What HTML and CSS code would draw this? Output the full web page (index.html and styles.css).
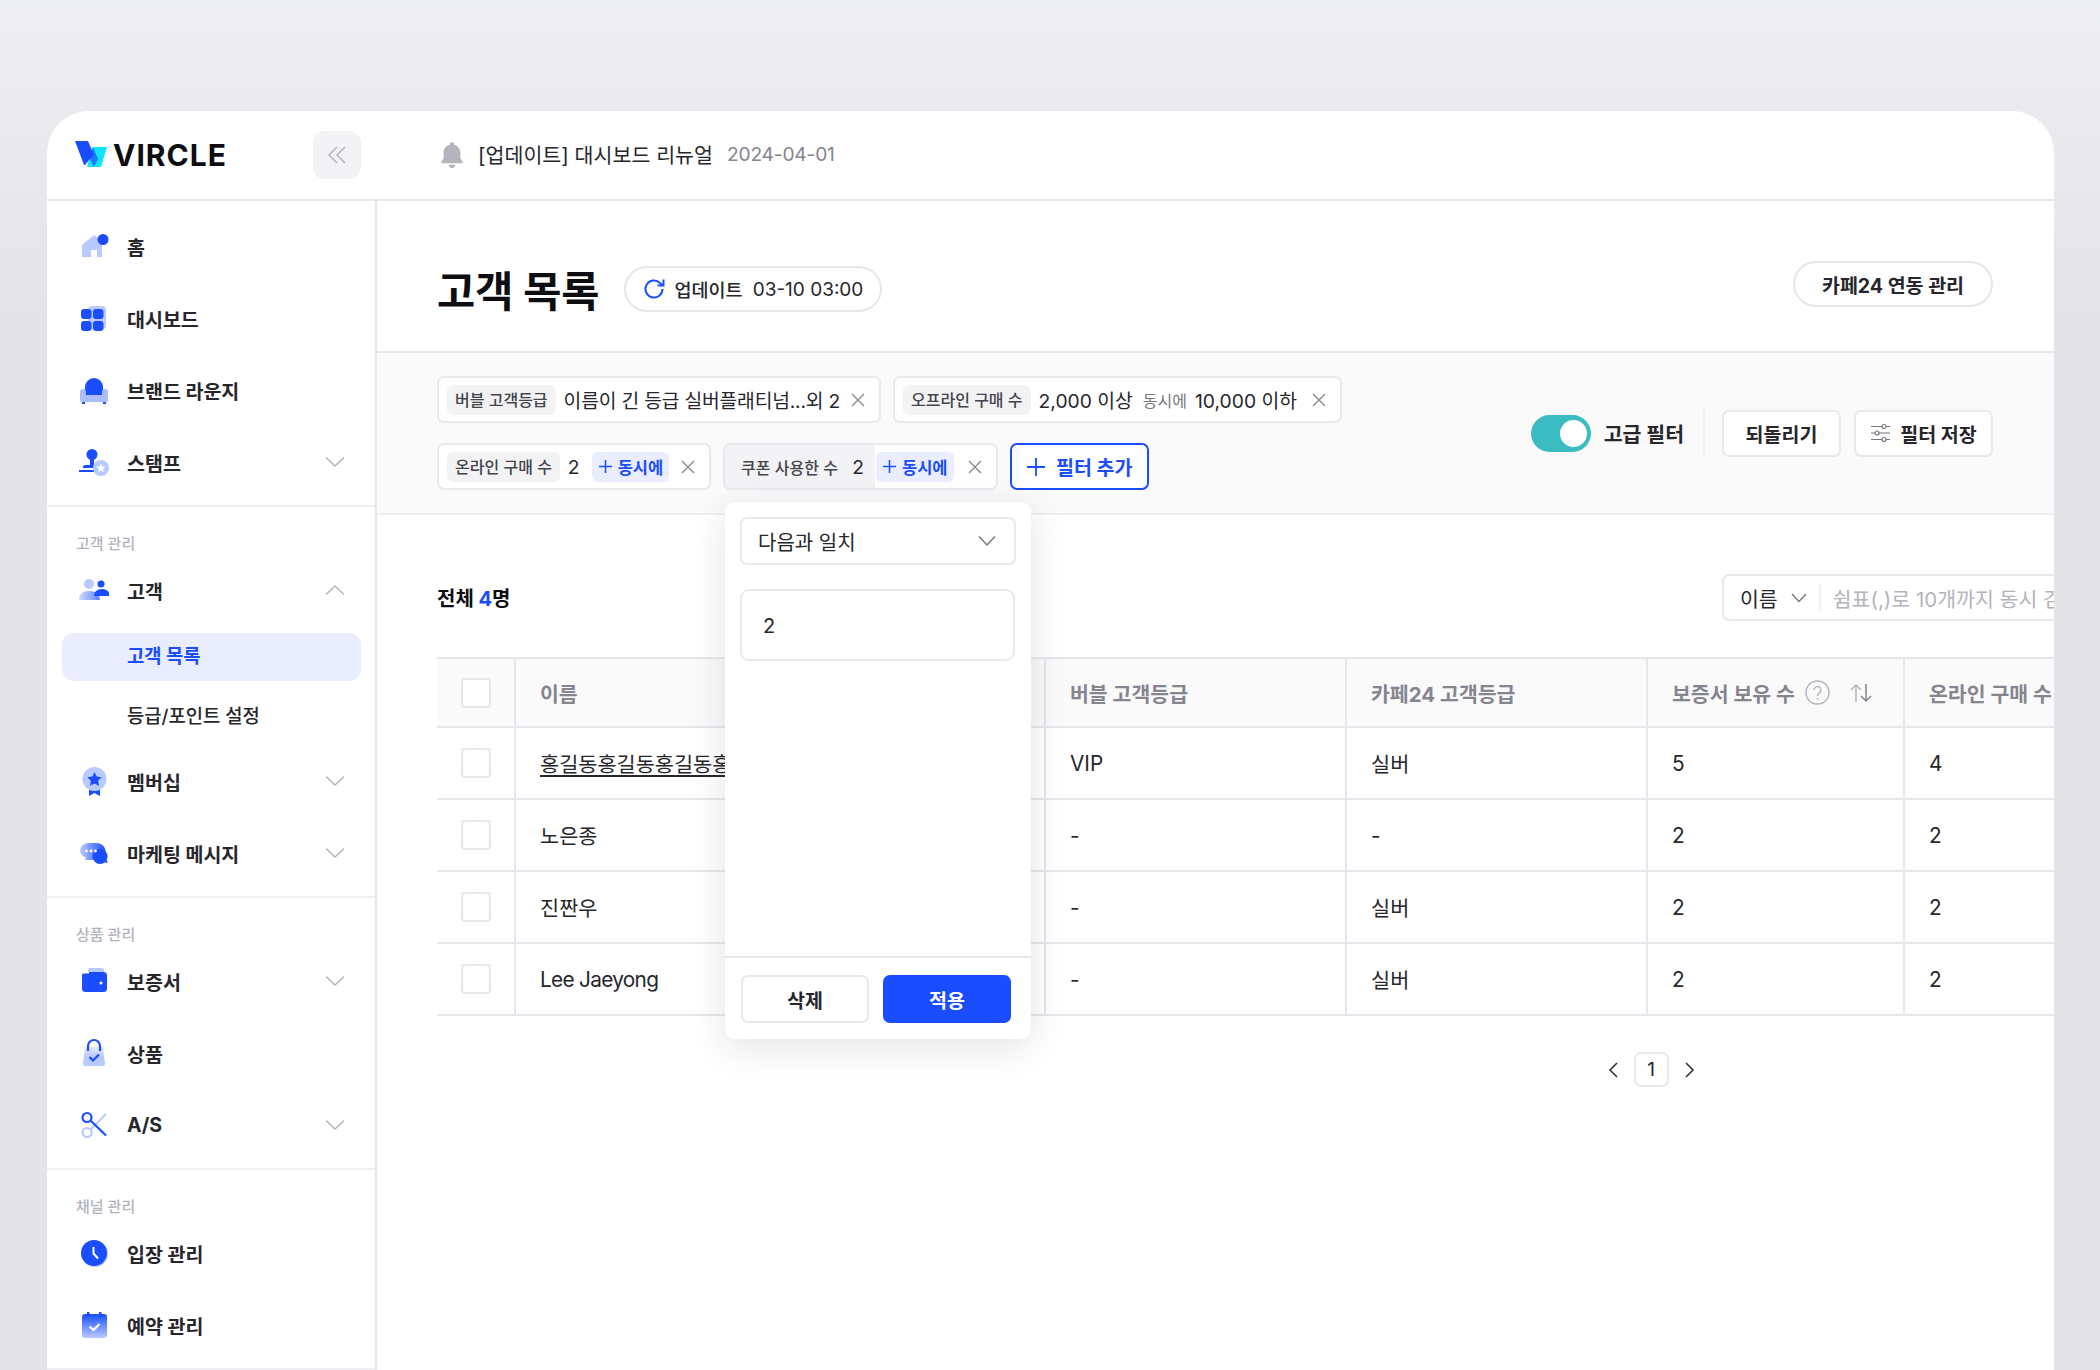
FILE: index.html
```html
<!DOCTYPE html>
<html lang="ko">
<head>
    <meta charset="UTF-8">
    <title>고객 목록</title>
    <link rel="stylesheet" href="styles.css">
</head>
<body>
<svg class="defs" width="0" height="0">
    <defs>
        <linearGradient id="fadeDown" x1="0" y1="0" x2="0" y2="1"><stop offset="0" stop-color="#1a4dff"/><stop offset="1" stop-color="#b9caff"/></linearGradient>
        <linearGradient id="fadeRight" x1="0" y1="0" x2="1" y2="0"><stop offset="0" stop-color="#b9caff"/><stop offset="1" stop-color="#1a4dff"/></linearGradient>
        <linearGradient id="bagFill" x1="0" y1="0" x2="0" y2="1"><stop offset="0" stop-color="#e4eaff"/><stop offset=".5" stop-color="#b9caff"/><stop offset="1" stop-color="#b9caff"/></linearGradient>
    </defs>
</svg>
<div class="app">
    <header class="topbar">
        <div class="brand">
            <svg class="logo-mark" width="33" height="28" viewBox="0 0 33 28">
                <path d="M18 6H32L26 26H12Z" fill="#0fe3ff"/>
                <path d="M18 6L23 18L19 26L14 16Z" fill="#1a7bff"/>
                <path d="M0 0H13L19 14L15 18L10 24H9Z" fill="#1a4dff"/>
            </svg>
            <span class="logo-text">VIRCLE</span>
            <button class="collapse">
                <svg width="20" height="20" viewBox="0 0 20 20" fill="none" stroke="#b3b3bd" stroke-width="1.5"><path d="M10 2L2 10L10 18M18 2L10 10L18 18"/></svg>
            </button>
        </div>
        <div class="notice">
            <svg width="28" height="28" viewBox="0 0 26 26" fill="#b4b4bd"><path d="M13 2a2 2 0 0 1 2 2v.4c3.600.9 5.800 3.800 5.800 7.600v5l2 3.200v1.300H3.200v-1.300l2-3.200v-5c0-3.800 2.200-6.700 5.800-7.600V4a2 2 0 0 1 2-2z"/><path d="M10 23h6a3 3 0 0 1-6 0z"/></svg>
            <span class="notice-text">[업데이트] 대시보드 리뉴얼</span>
            <span class="notice-date">2024-04-01</span>
        </div>
    </header>

    <div class="body">
        <nav class="sidebar">
            <div class="nav-group nav-group-first">
                <a class="nav-item">
                    <svg class="nav-icon" viewBox="0 0 30 30"><path d="M3 14L15 4L23 10V26H18V19H12V26H3Z" fill="#b9caff"/><circle cx="24" cy="8.5" r="5.5" fill="#1a4dff"/></svg>
                    <span>홈</span>
                </a>
                <a class="nav-item">
                    <svg class="nav-icon" viewBox="0 0 30 30"><rect x="9" y="3" width="18" height="23" rx="4" fill="#b9caff"/><rect x="2" y="6" width="10.5" height="10" rx="3" fill="#1a4dff"/><rect x="14" y="6" width="10.5" height="10" rx="3" fill="#1a4dff"/><rect x="2" y="18" width="10.5" height="10" rx="3" fill="#1a4dff"/><rect x="14" y="18" width="10.5" height="10" rx="3" fill="#1a4dff"/></svg>
                    <span>대시보드</span>
                </a>
                <a class="nav-item">
                    <svg class="nav-icon" viewBox="0 0 30 30"><path d="M6 22V12a9 9 0 0 1 18 0V22Z" fill="#1a4dff"/><path d="M1 17a3 3 0 0 1 6 0v3h16v-3a3 3 0 0 1 6 0v8a2 2 0 0 1-2 2H3a2 2 0 0 1-2-2Z" fill="#a9bdff"/><rect x="3" y="27" width="3" height="2" fill="#1a4dff"/><rect x="24" y="27" width="3" height="2" fill="#1a4dff"/></svg>
                    <span>브랜드 라운지</span>
                </a>
                <a class="nav-item">
                    <svg class="nav-icon" viewBox="0 0 30 30"><circle cx="13" cy="7.5" r="5.5" fill="#1a4dff"/><path d="M11 10h4v8h4a2 2 0 0 1 2 2v1H4v-1a2 2 0 0 1 2-2h5Z" fill="#1a4dff"/><rect y="23" width="18" height="2" fill="#1a4dff"/><circle cx="22" cy="21" r="8" fill="#b9caff"/><path d="M22 16.5l1.400 2.900 3.100.4-2.300 2.100.6 3.100-2.800-1.500-2.800 1.500.6-3.100-2.300-2.100 3.100-.4Z" fill="#fff"/></svg>
                    <span>스탬프</span>
                    <svg class="chevron" viewBox="0 0 20 12" fill="none" stroke="#b3b3bd" stroke-width="1.5"><path d="M1 1.500L10 10L19 1.500"/></svg>
                </a>
            </div>

            <div class="nav-group">
                <div class="nav-label">고객 관리</div>
                <a class="nav-item">
                    <svg class="nav-icon" viewBox="0 0 30 30"><circle cx="10" cy="9" r="5" fill="#b9caff"/><path d="M0 25c0-6 4-9 10-9s11 3 11 9Z" fill="url(#fadeRight)" opacity=".7"/><circle cx="22" cy="9" r="3.5" fill="#1a4dff"/><path d="M15 21c0-4 3-7 8-7s8 3 8 7Z" fill="#1a4dff"/></svg>
                    <span>고객</span>
                    <svg class="chevron" viewBox="0 0 20 12" fill="none" stroke="#b3b3bd" stroke-width="1.5"><path d="M1 10.500L10 2L19 10.500"/></svg>
                </a>
                <div class="sub-list">
                    <a class="sub-item sub-active">고객 목록</a>
                    <a class="sub-item">등급/포인트 설정</a>
                </div>
                <a class="nav-item">
                    <svg class="nav-icon" viewBox="0 0 30 30"><path d="M10 21h11v9l-5.500-3-5.500 3Z" fill="#1a4dff"/><circle cx="15.5" cy="13" r="12" fill="#b9caff"/><path d="M15.500 6l2.200 4.600 5 .7-3.600 3.500.9 5-4.500-2.400-4.500 2.400.9-5-3.600-3.500 5-.7Z" fill="#1a4dff"/></svg>
                    <span>멤버십</span>
                    <svg class="chevron" viewBox="0 0 20 12" fill="none" stroke="#b3b3bd" stroke-width="1.5"><path d="M1 1.500L10 10L19 1.500"/></svg>
                </a>
                <a class="nav-item">
                    <svg class="nav-icon" viewBox="0 0 30 30"><path d="M10 5h6a10 8 0 0 1 7 14 8 8 0 0 1-9 3H6l1-2.500C3 18 1 15.500 1 13a9 8 0 0 1 9-8Z" fill="url(#fadeRight)"/><circle cx="21" cy="18.5" r="7.5" fill="#1a4dff"/><path d="M24 24l5 1-2-4Z" fill="#1a4dff"/><circle cx="7.5" cy="13" r="1.4" fill="#fff"/><circle cx="12" cy="13" r="1.4" fill="#fff"/><circle cx="16.5" cy="13" r="1.4" fill="#fff"/></svg>
                    <span>마케팅 메시지</span>
                    <svg class="chevron" viewBox="0 0 20 12" fill="none" stroke="#b3b3bd" stroke-width="1.5"><path d="M1 1.500L10 10L19 1.500"/></svg>
                </a>
            </div>

            <div class="nav-group">
                <div class="nav-label">상품 관리</div>
                <a class="nav-item">
                    <svg class="nav-icon" viewBox="0 0 30 30"><rect x="9" y="2" width="16" height="8" rx="2" fill="#b9caff"/><rect x="3" y="6" width="25" height="20" rx="3.5" fill="#1a4dff"/><circle cx="22" cy="17" r="1.5" fill="#fff"/><rect x="3" y="6" width="7" height="1.5" fill="#fff"/></svg>
                    <span>보증서</span>
                    <svg class="chevron" viewBox="0 0 20 12" fill="none" stroke="#b3b3bd" stroke-width="1.5"><path d="M1 1.500L10 10L19 1.500"/></svg>
                </a>
                <a class="nav-item">
                    <svg class="nav-icon" viewBox="0 0 30 30"><path d="M6 9h18l2 17a2 2 0 0 1-2 2H6a2 2 0 0 1-2-2Z" fill="url(#bagFill)"/><path d="M9 13V8a6 6 0 0 1 12 0v5" fill="none" stroke="#1a4dff" stroke-width="2.2"/><path d="M10.500 19l3.500 3.500 6-6" fill="none" stroke="#1a4dff" stroke-width="2.2"/></svg>
                    <span>상품</span>
                </a>
                <a class="nav-item">
                    <svg class="nav-icon" viewBox="0 0 30 30" fill="none" stroke-width="2.2"><circle cx="8" cy="22.5" r="4.5" stroke="#b9caff"/><path d="M11.500 19.500L27 4" stroke="#b9caff"/><circle cx="8" cy="7.5" r="4.5" stroke="#1a4dff"/><path d="M11.500 10.500L27 25.500" stroke="#1a4dff"/></svg>
                    <span>A/S</span>
                    <svg class="chevron" viewBox="0 0 20 12" fill="none" stroke="#b3b3bd" stroke-width="1.5"><path d="M1 1.500L10 10L19 1.500"/></svg>
                </a>
            </div>

            <div class="nav-group">
                <div class="nav-label">채널 관리</div>
                <a class="nav-item">
                    <svg class="nav-icon" viewBox="0 0 30 30"><circle cx="16" cy="16" r="13" fill="#b9caff"/><circle cx="15" cy="15" r="13" fill="#1a4dff"/><path d="M14.500 9v6.500l4.500 5" fill="none" stroke="#fff" stroke-width="2"/></svg>
                    <span>입장 관리</span>
                </a>
                <a class="nav-item">
                    <svg class="nav-icon" viewBox="0 0 30 30"><rect x="3" y="4" width="25" height="24" rx="3" fill="url(#fadeDown)"/><rect x="8" y="2" width="2.5" height="4" fill="#1a4dff"/><rect x="20" y="2" width="2.5" height="4" fill="#1a4dff"/><path d="M10.500 16.500l4 3.500 6-6" fill="none" stroke="#fff" stroke-width="2.2"/></svg>
                    <span>예약 관리</span>
                </a>
            </div>
        </nav>

        <main class="main">
            <section class="title-row">
                <h1 class="page-title">고객 목록</h1>
                <div class="update-pill">
                    <svg width="22" height="22" viewBox="0 0 22 22" fill="none" stroke="#1a4dff" stroke-width="2"><path d="M19.500 11a8.500 8.500 0 1 1-2.600-6.100L20 7.500"/><path d="M20.500 1.500V7.500H14.500"/></svg>
                    <strong>업데이트</strong>
                    <span>03-10 03:00</span>
                </div>
                <button class="link-pill">카페24 연동 관리</button>
            </section>

            <section class="filter-bar">
                <div class="chip-rows">
                    <div class="chip-row">
                        <div class="chip chip-a">
                            <span class="chip-label">버블 고객등급</span>
                            <span class="chip-value chip-value-long">이름이 긴 등급 실버플래티넘...외 2</span>
                            <svg class="chip-x" viewBox="0 0 16 16" fill="none" stroke="#8f8f99" stroke-width="1.5"><path d="M2 2L14 14M14 2L2 14"/></svg>
                        </div>
                        <div class="chip chip-b">
                            <span class="chip-label">오프라인 구매 수</span>
                            <span class="chip-value">2,000 이상</span>
                            <span class="chip-and">동시에</span>
                            <span class="chip-value">10,000 이하</span>
                            <svg class="chip-x" viewBox="0 0 16 16" fill="none" stroke="#8f8f99" stroke-width="1.5"><path d="M2 2L14 14M14 2L2 14"/></svg>
                        </div>
                    </div>
                    <div class="chip-row">
                        <div class="chip chip-c">
                            <span class="chip-label">온라인 구매 수</span>
                            <span class="chip-value">2</span>
                            <span class="chip-tag"><svg width="15" height="15" viewBox="0 0 15 15" stroke="#1a4dff" stroke-width="1.5"><path d="M7.500 1V14M1 7.500H14"/></svg>동시에</span>
                            <svg class="chip-x" viewBox="0 0 16 16" fill="none" stroke="#8f8f99" stroke-width="1.5"><path d="M2 2L14 14M14 2L2 14"/></svg>
                        </div>
                        <div class="chip chip-open">
                            <span class="chip-head"><span class="chip-head-label">쿠폰 사용한 수</span><span class="chip-value">2</span></span>
                            <span class="chip-tag"><svg width="15" height="15" viewBox="0 0 15 15" stroke="#1a4dff" stroke-width="1.5"><path d="M7.500 1V14M1 7.500H14"/></svg>동시에</span>
                            <svg class="chip-x" viewBox="0 0 16 16" fill="none" stroke="#8f8f99" stroke-width="1.5"><path d="M2 2L14 14M14 2L2 14"/></svg>
                        </div>
                        <button class="add-filter">
                            <svg width="20" height="20" viewBox="0 0 20 20" stroke="#1a4dff" stroke-width="1.8"><path d="M10 1V19M1 10H19"/></svg>
                            필터 추가
                        </button>
                    </div>
                </div>
                <div class="filter-actions">
                    <span class="toggle"><span class="knob"></span></span>
                    <span class="toggle-text">고급 필터</span>
                    <span class="v-sep"></span>
                    <button class="action-btn btn-reset">되돌리기</button>
                    <button class="action-btn btn-save">
                        <svg width="21" height="20" viewBox="0 0 21 20" fill="none" stroke="#77777f" stroke-width="1.2"><path d="M1 3.500H12M16 3.500H20M1 10H5M9 10H20M1 16.500H12M16 16.500H20"/><circle cx="14" cy="3.5" r="2"/><circle cx="7" cy="10" r="2"/><circle cx="14" cy="16.5" r="2"/></svg>
                        필터 저장
                    </button>
                </div>
            </section>

            <section class="content">
                <div class="toolbar">
                    <div class="count">전체 <em>4</em>명</div>
                    <div class="search">
                        <span class="search-type">이름
                            <svg width="16" height="10" viewBox="0 0 16 10" fill="none" stroke="#77777f" stroke-width="1.4"><path d="M1 1L8 8.500L15 1"/></svg>
                        </span>
                        <span class="search-hint">쉼표(,)로 10개까지 동시 검색 가능합니다</span>
                    </div>
                </div>

                <table class="grid">
                    <thead>
                        <tr>
                            <th class="col-check"><span class="checkbox"></span></th>
                            <th class="col-name">이름</th>
                            <th class="col-grade">버블 고객등급</th>
                            <th class="col-cafe">카페24 고객등급</th>
                            <th class="col-warranty">
                                <span class="th-inner">보증서 보유 수
                                    <svg class="help" width="25" height="25" viewBox="0 0 25 25" fill="none" stroke="#b3b3bd" stroke-width="1.4"><circle cx="12.5" cy="12.5" r="11.5"/><path d="M9 10a3.500 3.500 0 1 1 5.500 2.900c-1.300.9-2 1.500-2 3"/><path d="M12.500 18v1.800"/></svg>
                                    <svg class="sort" width="24" height="20" viewBox="0 0 24 20" fill="none" stroke-width="1.5"><path d="M7 19V2M2 7L7 2L12 7" stroke="#b3b3bd"/><path d="M17 1V18M12 13L17 18L22 13" stroke="#85858f"/></svg>
                                </span>
                            </th>
                            <th>온라인 구매 수</th>
                        </tr>
                    </thead>
                    <tbody>
                        <tr>
                            <td class="col-check"><span class="checkbox"></span></td>
                            <td><a class="name-link">홍길동홍길동홍길동홍길동홍길동</a></td>
                            <td>VIP</td><td>실버</td><td>5</td><td>4</td>
                        </tr>
                        <tr>
                            <td class="col-check"><span class="checkbox"></span></td>
                            <td>노은종</td>
                            <td>-</td><td>-</td><td>2</td><td>2</td>
                        </tr>
                        <tr>
                            <td class="col-check"><span class="checkbox"></span></td>
                            <td>진짠우</td>
                            <td>-</td><td>실버</td><td>2</td><td>2</td>
                        </tr>
                        <tr>
                            <td class="col-check"><span class="checkbox"></span></td>
                            <td class="name-latin">Lee Jaeyong</td>
                            <td>-</td><td>실버</td><td>2</td><td>2</td>
                        </tr>
                    </tbody>
                </table>

                <div class="pager">
                    <svg width="12" height="18" viewBox="0 0 12 18" fill="none" stroke="#33333a" stroke-width="1.6"><path d="M10 2L3 9L10 16"/></svg>
                    <span class="page-num">1</span>
                    <svg width="12" height="18" viewBox="0 0 12 18" fill="none" stroke="#33333a" stroke-width="1.6"><path d="M2 2L9 9L2 16"/></svg>
                </div>
            </section>

            <div class="popup">
                <div class="popup-body">
                    <div class="popup-select">다음과 일치
                        <svg width="20" height="12" viewBox="0 0 20 12" fill="none" stroke="#77777f" stroke-width="1.5"><path d="M2 1.500L10 10L18 1.500"/></svg>
                    </div>
                    <div class="popup-input">2</div>
                </div>
                <div class="popup-foot">
                    <button class="btn-delete">삭제</button>
                    <button class="btn-apply">적용</button>
                </div>
            </div>
        </main>
    </div>
</div>
</body>
</html>
```

FILE: styles.css
```css
* {
    margin: 0;
    padding: 0;
    box-sizing: border-box;
}

html, body {
    height: 1370px;
    overflow: hidden;
}

body {
    background: linear-gradient(#eeeff2 0, #e3e3e8 320px);
    font-family: "Inter", "Noto Sans CJK KR", sans-serif;
    color: #26262b;
}

button {
    font-family: inherit;
    background: none;
    border: 0;
}

.defs {
    position: absolute;
}

.app {
    width: 2007px;
    height: 1259px;
    margin: 111px 0 0 47px;
    background: #fff;
    border-radius: 42px 42px 0 0;
    overflow: hidden;
}

/* top bar */
.topbar {
    display: flex;
    height: 90px;
    border-bottom: 2px solid #e6e6ec;
}

.brand {
    display: flex;
    align-items: center;
    width: 329px;
    padding: 0 15px 0 28px;
}

.logo-mark {
    flex: none;
}

.logo-text {
    margin-left: 5px;
    font-size: 30px;
    font-weight: 700;
    color: #0d0d12;
    letter-spacing: 1px;
}

.collapse {
    display: flex;
    align-items: center;
    justify-content: center;
    width: 48px;
    height: 48px;
    margin-left: auto;
    background: #f3f3f5;
    border-radius: 12px;
}

.notice {
    display: flex;
    align-items: center;
    padding: 0 0 2px 62px;
    font-size: 20.6px;
}

.notice-text {
    margin-left: 12px;
}

.notice-date {
    margin-left: 14px;
    font-size: 19.2px;
    letter-spacing: -0.2px;
    color: #85858f;
}

/* side menu */
.body {
    display: flex;
    height: 1169px;
}

.sidebar {
    flex: none;
    width: 330px;
    border-right: 2px solid #e6e6ec;
}

.nav-group {
    padding: 27px 0 7px;
    border-bottom: 2px solid #efeff3;
}

.nav-group-first {
    padding-top: 9px;
}

.nav-label {
    height: 20px;
    padding-left: 29px;
    font-size: 15px;
    line-height: 20px;
    font-weight: 500;
    color: #b3b3bd;
}

.nav-item {
    display: flex;
    align-items: center;
    height: 72px;
    padding: 0 30px 0 32px;
    font-size: 19.5px;
    font-weight: 700;
}

.nav-icon {
    flex: none;
    width: 30px;
    height: 30px;
    margin-right: 18px;
}

.chevron {
    width: 20px;
    height: 12px;
    margin-left: auto;
}

.sub-list {
    display: flex;
    flex-direction: column;
    gap: 12px;
    padding: 7px 0 4px;
}

.sub-item {
    height: 48px;
    margin: 0 14px 0 15px;
    padding-left: 65px;
    border-radius: 12px;
    font-size: 18.8px;
    line-height: 48px;
    font-weight: 500;
}

.sub-active {
    background: #e9edff;
    color: #1a4dff;
    font-weight: 700;
}

/* main */
.main {
    position: relative;
    flex: 1;
    min-width: 0;
    overflow: hidden;
}

.title-row {
    display: flex;
    align-items: center;
    height: 152px;
    padding: 26px 61px 0 60px;
    border-bottom: 2px solid #e6e6ec;
}

.page-title {
    font-size: 41.5px;
    font-weight: 700;
    color: #0d0d12;
}

.update-pill {
    display: flex;
    align-items: center;
    height: 46px;
    margin-left: 24px;
    padding: 0 17px;
    border: 2px solid #e6e6ec;
    border-radius: 23px;
    font-size: 19px;
}

.update-pill strong {
    margin: 0 10px;
    font-size: 18.5px;
    font-weight: 500;
}

.link-pill {
    width: 200px;
    height: 46px;
    margin: 0 0 10px auto;
    border: 2px solid #e6e6ec;
    border-radius: 23px;
    font-size: 19.5px;
    font-weight: 700;
    color: #26262b;
}

.filter-bar {
    display: flex;
    align-items: center;
    justify-content: space-between;
    height: 162px;
    padding: 0 61px 0 60px;
    background: #fafafb;
    border-bottom: 2px solid #efeff3;
}

.chip-rows {
    display: flex;
    flex-direction: column;
    gap: 20px;
}

.chip-row {
    display: flex;
    gap: 12px;
}

.chip {
    display: flex;
    align-items: center;
    height: 47px;
    padding: 0 0 0 8px;
    background: #fff;
    border: 2px solid #e8e8ee;
    border-radius: 7px;
    font-size: 19.3px;
    white-space: nowrap;
}

.chip-a { width: 444px; }
.chip-b { width: 449px; }
.chip-c { width: 274px; }

.chip-label {
    height: 30px;
    padding: 0 8px;
    background: #f3f3f5;
    border-radius: 6px;
    font-size: 16px;
    line-height: 30px;
    font-weight: 500;
    color: #44444c;
}

.chip-value {
    margin-left: 8px;
}

.chip-value-long {
    letter-spacing: -0.2px;
}

.chip-and {
    margin-left: 10px;
    font-size: 16px;
    color: #77777f;
}

.chip-tag {
    display: flex;
    align-items: center;
    gap: 5px;
    height: 30px;
    margin-left: 12px;
    padding: 0 6px;
    background: #e9edff;
    border-radius: 6px;
    font-size: 16.5px;
    font-weight: 700;
    color: #1a4dff;
}

.chip-x {
    flex: none;
    width: 16px;
    height: 16px;
    margin-left: auto;
    margin-right: 13px;
}

.chip-open {
    width: 275px;
    padding-left: 0;
}

.chip-head {
    display: flex;
    align-items: center;
    justify-content: space-between;
    width: 150px;
    height: 100%;
    padding: 0 11px 0 16px;
    background: #f3f3f5;
    border-radius: 5px 0 0 5px;
}

.chip-head-label {
    font-size: 16px;
    font-weight: 500;
    color: #44444c;
}

.chip-open .chip-tag {
    margin-left: 1px;
}

.add-filter {
    display: flex;
    align-items: center;
    gap: 10px;
    width: 139px;
    height: 47px;
    padding-left: 14px;
    background: #fff;
    border: 2px solid #1a4dff;
    border-radius: 7px;
    font-size: 19.5px;
    font-weight: 700;
    color: #1a4dff;
}

.filter-actions {
    display: flex;
    align-items: center;
}

.toggle {
    display: flex;
    align-items: center;
    justify-content: flex-end;
    width: 60px;
    height: 37px;
    padding-right: 4px;
    background: #3bbcc2;
    border-radius: 19px;
}

.knob {
    width: 27px;
    height: 27px;
    background: #fff;
    border-radius: 50%;
}

.toggle-text {
    margin-left: 13px;
    font-size: 20.5px;
    font-weight: 700;
}

.v-sep {
    width: 2px;
    height: 47px;
    margin: 0 17px 0 19px;
    background: #f1f1f4;
}

.action-btn {
    display: flex;
    align-items: center;
    justify-content: center;
    gap: 9px;
    height: 47px;
    background: #fff;
    border: 2px solid #e8e8ee;
    border-radius: 7px;
    font-size: 19.5px;
    font-weight: 700;
    color: #26262b;
}

.btn-reset { width: 119px; }
.btn-save { width: 139px; margin-left: 13px; }

/* table */
.content {
    padding: 59px 0 0 60px;
}

.toolbar {
    display: flex;
    align-items: center;
    justify-content: space-between;
    width: 1845px;
    margin-bottom: 36px;
}

.count {
    font-size: 20px;
    font-weight: 700;
    color: #0d0d12;
}

.count em {
    font-style: normal;
    color: #1a4dff;
}

.search {
    display: flex;
    align-items: center;
    width: 560px;
    height: 47px;
    border: 2px solid #e8e8ee;
    border-radius: 7px;
    font-size: 20.5px;
}

.search-type {
    display: flex;
    align-items: center;
    gap: 13px;
    height: 27px;
    padding: 0 12px 0 16px;
    border-right: 2px solid #f1f1f4;
}

.search-hint {
    margin-left: 12px;
    white-space: nowrap;
    color: #b3b3bd;
}

.grid {
    width: 2428px;
    table-layout: fixed;
    border-collapse: collapse;
    font-size: 20.8px;
}

.grid th, .grid td {
    padding: 0 0 0 24px;
    border: 2px solid #e6e6ec;
    text-align: left;
    white-space: nowrap;
    overflow: hidden;
}

.grid tr > :first-child {
    border-left: 0;
}

.grid th {
    height: 69px;
    background: #fafafb;
    font-size: 20.5px;
    font-weight: 700;
    color: #85858f;
}

.grid td {
    height: 72px;
    font-weight: 400;
}

.grid .col-check {
    width: 78px;
    padding: 0;
    text-align: center;
}

.grid .name-latin {
    letter-spacing: -0.7px;
}

.col-name { width: 530px; }
.col-grade { width: 301px; }
.col-cafe { width: 301px; }
.col-warranty { width: 257px; }

.checkbox {
    display: inline-block;
    width: 30px;
    height: 30px;
    background: #fff;
    border: 2px solid #e6e6ec;
    border-radius: 4px;
    vertical-align: middle;
}

.th-inner {
    display: flex;
    align-items: center;
}

.help {
    margin-left: 10px;
}

.sort {
    margin-left: 19px;
}

.name-link {
    text-decoration: underline;
    text-underline-offset: 3px;
}

.pager {
    display: flex;
    align-items: center;
    justify-content: center;
    gap: 15px;
    width: 2428px;
    margin-top: 36px;
}

.page-num {
    width: 35px;
    height: 35px;
    border: 2px solid #e8e8ee;
    border-radius: 7px;
    font-size: 19px;
    line-height: 31px;
    text-align: center;
}

/* open filter popup */
.popup {
    position: absolute;
    left: 348px;
    top: 301px;
    display: flex;
    flex-direction: column;
    width: 306px;
    height: 537px;
    background: #fff;
    border-radius: 10px;
    box-shadow: 0 8px 36px rgba(30, 30, 50, 0.12);
}

.popup-body {
    flex: 1;
    display: flex;
    flex-direction: column;
    gap: 24px;
    padding: 15px 15px 0;
    border-bottom: 2px solid #e6e6ec;
}

.popup-select {
    display: flex;
    align-items: center;
    justify-content: space-between;
    height: 48px;
    padding: 0 17px 0 16px;
    border: 2px solid #e8e8ee;
    border-radius: 7px;
    font-size: 20px;
}

.popup-input {
    width: 275px;
    height: 72px;
    padding-left: 21px;
    border: 2px solid #e8e8ee;
    border-radius: 9px;
    font-size: 20px;
    line-height: 70px;
}

.popup-foot {
    display: flex;
    justify-content: space-between;
    padding: 17px 20px 16px 16px;
}

.popup-foot button {
    width: 128px;
    height: 48px;
    border-radius: 7px;
    font-size: 19.5px;
    font-weight: 700;
}

.btn-delete {
    border: 2px solid #e8e8ee !important;
    color: #26262b;
}

.btn-apply {
    background: #1a4dff !important;
    color: #fff;
}
```
